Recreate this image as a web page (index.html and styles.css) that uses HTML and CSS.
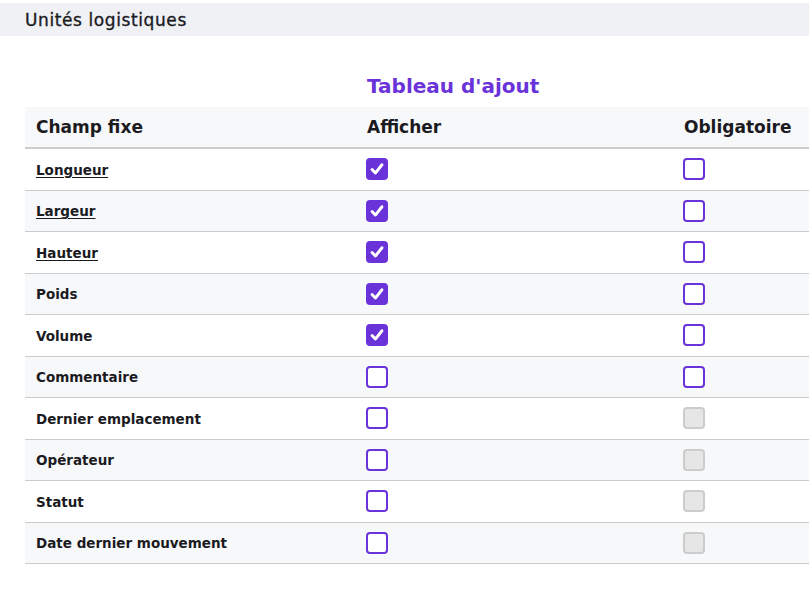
FILE: index.html
```html
<!DOCTYPE html>
<html lang="fr">
<head>
<meta charset="utf-8">
<link rel="stylesheet" href="styles.css">
</head>
<body>
<div class="topbar"><span class="page-title">Unités logistiques</span></div>
<div class="content">
  <div class="table-title-row"><div class="spacer"></div><h2 class="table-title">Tableau d'ajout</h2></div>
  <table class="fields">
    <thead>
      <tr><th class="c1">Champ fixe</th><th class="c2">Afficher</th><th class="c3">Obligatoire</th></tr>
    </thead>
    <tbody>
      <tr><td class="c1"><span class="lbl link">Longueur</span></td><td><span class="cb checked"><svg viewBox="0 0 16 16"><path d="M3.6 8.4 L6.6 11.6 L12.4 4.2"/></svg></span></td><td><span class="cb"></span></td></tr>
      <tr><td class="c1"><span class="lbl link">Largeur</span></td><td><span class="cb checked"><svg viewBox="0 0 16 16"><path d="M3.6 8.4 L6.6 11.6 L12.4 4.2"/></svg></span></td><td><span class="cb"></span></td></tr>
      <tr><td class="c1"><span class="lbl link">Hauteur</span></td><td><span class="cb checked"><svg viewBox="0 0 16 16"><path d="M3.6 8.4 L6.6 11.6 L12.4 4.2"/></svg></span></td><td><span class="cb"></span></td></tr>
      <tr><td class="c1"><span class="lbl">Poids</span></td><td><span class="cb checked"><svg viewBox="0 0 16 16"><path d="M3.6 8.4 L6.6 11.6 L12.4 4.2"/></svg></span></td><td><span class="cb"></span></td></tr>
      <tr><td class="c1"><span class="lbl">Volume</span></td><td><span class="cb checked"><svg viewBox="0 0 16 16"><path d="M3.6 8.4 L6.6 11.6 L12.4 4.2"/></svg></span></td><td><span class="cb"></span></td></tr>
      <tr><td class="c1"><span class="lbl">Commentaire</span></td><td><span class="cb"></span></td><td><span class="cb"></span></td></tr>
      <tr><td class="c1"><span class="lbl">Dernier emplacement</span></td><td><span class="cb"></span></td><td><span class="cb disabled"></span></td></tr>
      <tr><td class="c1"><span class="lbl">Opérateur</span></td><td><span class="cb"></span></td><td><span class="cb disabled"></span></td></tr>
      <tr><td class="c1"><span class="lbl">Statut</span></td><td><span class="cb"></span></td><td><span class="cb disabled"></span></td></tr>
      <tr><td class="c1"><span class="lbl">Date dernier mouvement</span></td><td><span class="cb"></span></td><td><span class="cb disabled"></span></td></tr>
    </tbody>
  </table>
</div>
</body>
</html>
```

FILE: styles.css
```css
html, body {
  margin: 0;
  padding: 0;
  overflow: hidden;
  background: #ffffff;
  font-family: "DejaVu Sans", "Open Sans", sans-serif;
  color: #1b1b1f;
}
body {
  padding-top: 3px;
  width: 809px;
  height: 592px;
}
.topbar {
  height: 33px;
  background: #f0f1f5;
  display: flex;
  align-items: center;
  padding-left: 25px;
}
.page-title {
  font-size: 17px;
  font-weight: 400;
  letter-spacing: 0.6px;
  -webkit-text-stroke: 0.35px #1b1b1f;
}
.content {
  padding-left: 25px;
  padding-top: 29px;
  overflow: hidden;
}
.table-title-row {
  display: flex;
  height: 42px;
  align-items: center;
}
.spacer { width: 342px; flex: none; }
.table-title {
  margin: 0;
  font-size: 20px;
  font-weight: 700;
  color: #6a33d9;
}
.fields {
  border-collapse: collapse;
  width: 960px;
  table-layout: fixed;
}
.fields th {
  text-align: left;
  font-size: 17px;
  font-weight: 700;
  height: 40px;
  padding: 0 0 0 11px;
  background: #f7f8fa;
  border-bottom: 2px solid #cccccc;
}
.fields th.c1 { width: 320px; }
.fields th.c2 { width: 306px; }
.fields td {
  height: 40.5px;
  padding: 0 0 0 11px;
  border-bottom: 1px solid #cccccc;
  vertical-align: middle;
}
.fields tbody tr:nth-child(even) td { background: #f7f8fa; }
.lbl {
  font-size: 13.5px;
  font-weight: 700;
}
.lbl.link { text-decoration: underline; text-underline-offset: 2px; }
.cb {
  display: block;
  box-sizing: border-box;
  width: 22px;
  height: 22px;
  border: 2px solid #6a33d9;
  border-radius: 4px;
  background: #ffffff;
  margin-left: -1px;
}
.cb svg {
  display: block;
  width: 18px;
  height: 18px;
}
.cb svg path {
  fill: none;
  stroke: #ffffff;
  stroke-width: 2.6;
  stroke-linecap: round;
  stroke-linejoin: round;
}
.cb.checked {
  background: #6a33d9;
}
.cb.disabled {
  background: #e6e6e6;
  border-color: #cccccc;
}
```
